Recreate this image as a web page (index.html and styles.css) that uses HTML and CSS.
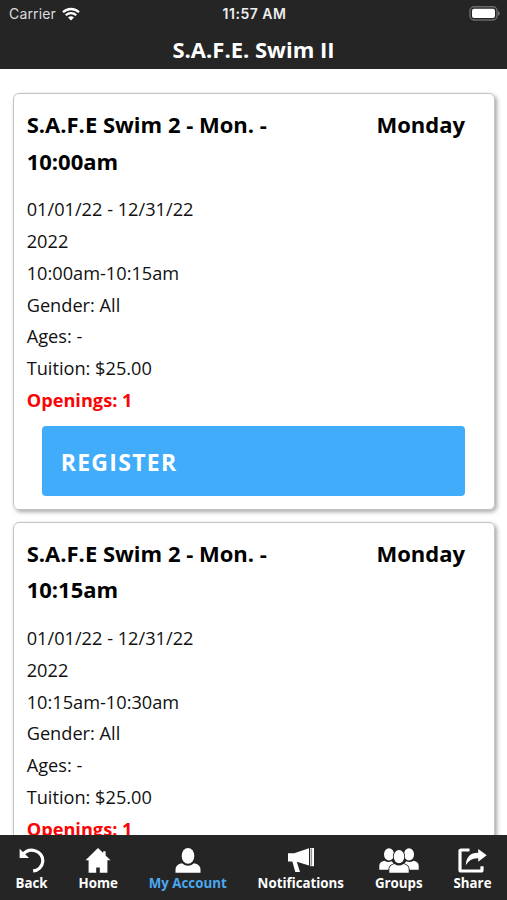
FILE: index.html
```
<!DOCTYPE html>
<html lang="en">
<head>
  <meta charset="UTF-8">
  <meta name="viewport" content="width=device-width, initial-scale=1.0">
  <title>S.A.F.E. Swim II</title>
  <link rel="stylesheet" href="styles.css">
</head>
<body>
  <header>
    <div class="status-bar">
      <div class="carrier">
        <span>Carrier</span>
        <svg width="18" height="14" viewBox="0 0 18 14" fill="none" stroke="#fff" stroke-width="2.3">
          <path d="M1 5.3a11.4 11.4 0 0 1 16 0"/>
          <path d="M3.8 8.3a7.4 7.4 0 0 1 10.4 0"/>
          <path d="M9 13.6L6 10.6a4.3 4.3 0 0 1 6 0z" fill="#fff" stroke="none"/>
        </svg>
      </div>
      <span class="clock">11:57 AM</span>
      <svg class="battery" width="31" height="15" viewBox="0 0 31 15">
        <rect x="1" y="0.8" width="27" height="13.2" rx="4" fill="#252525" stroke="#6a6a6a" stroke-width="1.4"/>
        <rect x="3" y="2.8" width="23" height="9.2" rx="2" fill="#fff"/>
        <path d="M29 5q1.6.8 1.6 2.4T29 9.8z" fill="#7b7b7b"/>
      </svg>
    </div>
    <h1>S.A.F.E. Swim II</h1>
  </header>

  <main>
    <section class="card">
      <div class="card-head">
        <h2>S.A.F.E Swim 2 - Mon. - 10:00am</h2>
        <h2 class="day">Monday</h2>
      </div>
      <ul>
        <li>01/01/22 - 12/31/22</li>
        <li>2022</li>
        <li>10:00am-10:15am</li>
        <li>Gender: All</li>
        <li>Ages: -</li>
        <li>Tuition: $25.00</li>
        <li class="openings">Openings: 1</li>
      </ul>
      <button type="button">REGISTER</button>
    </section>

    <section class="card">
      <div class="card-head">
        <h2>S.A.F.E Swim 2 - Mon. - 10:15am</h2>
        <h2 class="day">Monday</h2>
      </div>
      <ul>
        <li>01/01/22 - 12/31/22</li>
        <li>2022</li>
        <li>10:15am-10:30am</li>
        <li>Gender: All</li>
        <li>Ages: -</li>
        <li>Tuition: $25.00</li>
        <li class="openings">Openings: 1</li>
      </ul>
      <button type="button">REGISTER</button>
    </section>
  </main>

  <nav>
    <a class="tab">
      <svg width="26" height="26" viewBox="0 0 26 26">
        <path d="M3.5 6.8Q9 .6 16 2.8a10.2 10.2 0 0 1-1.9 20.1" fill="none" stroke="#fff" stroke-width="3.2"/>
        <path d="M.6 .8V10H10z" fill="#fff"/>
      </svg>
      <span>Back</span>
    </a>
    <a class="tab">
      <svg width="26" height="26" viewBox="0 0 26 26" fill="#fff">
        <path d="M13 0L.5 12.3H3.6V24.7h7.6v-5.2h3.6v5.2h7.6V12.3h3.1L20.6 7.4V3.2h-2.4V5.1z"/>
      </svg>
      <span>Home</span>
    </a>
    <a class="tab active">
      <svg width="26" height="26" viewBox="0 0 26 26" fill="#fff">
        <ellipse cx="13" cy="7.9" rx="6.3" ry="7.9"/>
        <path d="M.5 24.7v-3.2Q.5 16.4 7 15.2 13 20.2 19 15.2q6.5 1.2 6.5 6.3v3.2z"/>
      </svg>
      <span>My Account</span>
    </a>
    <a class="tab">
      <svg width="26" height="26" viewBox="0 0 26 26" fill="#fff">
        <path d="M0 5.3h6.2L21 .3V17.5L8.8 13.8 12 24H7.3L4.3 13.6H0z"/>
        <path d="M22.2 0H26v18.2h-3.8z"/>
        <path d="M23.6 .5v17.2" stroke="#666" stroke-width=".8"/>
      </svg>
      <span>Notifications</span>
    </a>
    <a class="tab">
      <svg width="40" height="26" viewBox="0 0 40 26" fill="#fff">
        <g id="side">
          <ellipse cx="10" cy="6.4" rx="5" ry="6.2"/>
          <path d="M.3 21.8v-4.1q0-3.8 5.2-5 3.4 2.4 7.2.6l2.3 2.6q-5 2-5.5 5.9z"/>
        </g>
        <use href="#side" transform="translate(40 0) scale(-1 1)"/>
        <g stroke="#252525" stroke-width="1.6" paint-order="stroke">
          <path d="M10.3 24.8v-3.9q0-3.6 5.2-5 4.5 3.3 9 0 5.2 1.4 5.2 5v3.9z"/>
          <ellipse cx="20" cy="8.6" rx="5.3" ry="6.6"/>
        </g>
      </svg>
      <span>Groups</span>
    </a>
    <a class="tab">
      <svg width="29" height="26" viewBox="0 0 29 26">
        <path d="M11.5 2H3Q2 2 2 3v19q0 1 1 1h20q1 0 1-1v-3.8" fill="none" stroke="#fff" stroke-width="3.2"/>
        <path d="M7.8 17.3Q8.3 4.6 20.2 4.8V1L28.7 7.3 20.2 13.8V10.3Q12 9.8 7.8 17.3z" fill="#fff"/>
      </svg>
      <span>Share</span>
    </a>
  </nav>
</body>
</html>
```
FILE: styles.css
```
* {
  box-sizing: border-box;
}
body {
  display: flex;
  flex-direction: column;
  height: 100vh;
  margin: 0;
  overflow: hidden;
  background: #fff;
  color: #111;
  font-family: "Open Sans", sans-serif;
}
h1, h2, ul {
  margin: 0;
  padding: 0;
}

/* Top bar */
header {
  flex: none;
  height: 68.5px;
  background: #252525;
  color: #fff;
}
.status-bar {
  display: grid;
  grid-template-columns: 1fr auto 1fr;
  align-items: center;
  height: 27px;
  padding: 0 7px 0 9px;
  font-family: Inter, sans-serif;
  font-size: 14px;
}
.carrier {
  display: flex;
  align-items: center;
  gap: 6px;
  color: #ddd;
  letter-spacing: 0.15px;
}
.clock {
  color: #eee;
  font-weight: 600;
  letter-spacing: 0.5px;
}
.battery {
  justify-self: end;
}
h1 {
  font-size: 22px;
  line-height: 44px;
  text-align: center;
}

/* Class list */
main {
  flex: 1;
  min-height: 0;
  overflow: hidden;
  padding: 24.5px 12.5px 0 13px;
}
.card {
  height: 416.5px;
  margin-bottom: 12.2px;
  padding: 12px 28.5px 0 12.7px;
  border: 1px solid #c4c4c4;
  border-radius: 6px;
  box-shadow: 2px 2px 4px rgba(0, 0, 0, 0.35);
}
.card-head {
  display: flex;
  justify-content: space-between;
  margin-bottom: 14.8px;
}
h2 {
  width: 270px;
  color: #000;
  font-size: 22px;
  line-height: 36.8px;
}
h2.day {
  width: auto;
}
ul {
  list-style: none;
  font-size: 18.2px;
  line-height: 31.75px;
}
.openings {
  color: #fa0505;
  font-weight: bold;
}
button {
  display: block;
  width: 423px;
  height: 69.5px;
  margin: 9.7px 0 0 15.5px;
  padding: 1px 18.5px 0;
  border: none;
  border-radius: 4px;
  background: #41adfa;
  color: #fff;
  font-family: inherit;
  font-size: 23px;
  font-weight: bold;
  letter-spacing: 1.3px;
  text-align: left;
}

/* Bottom tabs */
nav {
  display: flex;
  flex: none;
  justify-content: space-between;
  height: 65px;
  padding: 13px 15.5px 0;
  background: #252525;
}
.tab {
  display: flex;
  flex-direction: column;
  align-items: center;
  color: #fff;
  font-size: 13.3px;
  font-weight: bold;
  line-height: 18px;
}
.tab.active {
  color: #4aa8ee;
}
```
